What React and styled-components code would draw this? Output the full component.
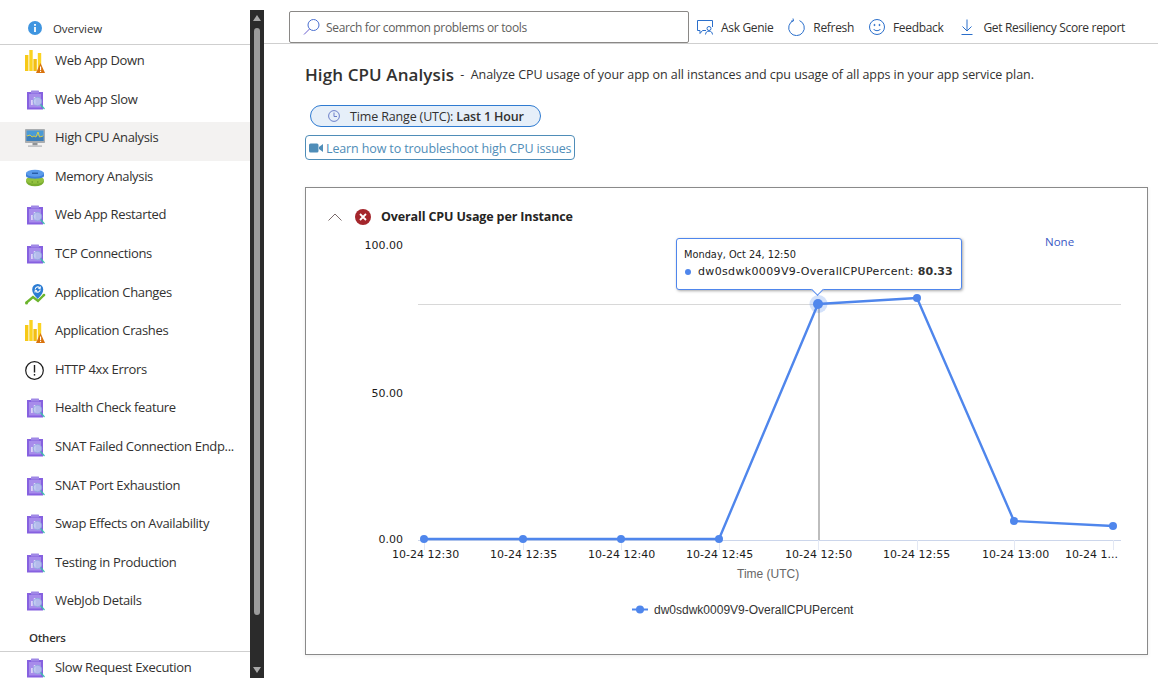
import React from 'react';
import styled, { createGlobalStyle } from 'styled-components';

const GlobalStyle = createGlobalStyle`
  html, body {
    margin: 0;
    padding: 0;
    height: 100%;
    overflow: hidden;
    background: #fff;
  }
  body {
    font-family: 'Open Sans', 'Liberation Sans', sans-serif;
    color: #323130;
  }
`;

const Page = styled.div`
  display: flex;
  width: 1158px;
  height: 678px;
  overflow: hidden;
`;

const Sidebar = styled.nav`
  width: 250px;
  flex: none;
  height: 678px;
  overflow: hidden;
`;

const OverviewRow = styled.div`
  display: flex;
  align-items: center;
  height: 45px;
  padding: 12px 0 0 28px;
  box-sizing: border-box;
  border-bottom: 1px solid #cfcfcf;
  font-size: 11.5px;
  letter-spacing: -0.1px;
  color: #323130;
  gap: 11px;
`;

const NavRow = styled.div`
  display: flex;
  align-items: flex-start;
  height: 38.6px;
  padding-left: 25px;
  gap: 8px;
  background: ${(p) => (p.$active ? '#f3f2f1' : 'transparent')};
`;

const NavIcon = styled.svg`
  width: 22px;
  height: 24px;
  flex: none;
  margin-top: 5px;
`;

const NavLabel = styled.span`
  font-size: 13px;
  line-height: 31px;
  letter-spacing: -0.33px;
  white-space: nowrap;
  color: #323130;
`;

const GroupTitle = styled.div`
  height: 28px;
  box-sizing: border-box;
  padding: 6px 0 0 29px;
  line-height: 16px;
  font-size: 11.5px;
  font-weight: 600;
  letter-spacing: -0.25px;
  border-bottom: 1px solid #cfcfcf;
`;

const Scrollbar = styled.div`
  width: 14px;
  flex: none;
  margin-top: 10px;
  background: #2b2b2b;
  display: flex;
  flex-direction: column;
  align-items: center;
`;

const ScrollArrow = styled.div`
  width: 0;
  height: 0;
  flex: none;
  margin: ${(p) => (p.$down ? 'auto 0 5px' : '5px 0 6px')};
  border-left: 4px solid transparent;
  border-right: 4px solid transparent;
  ${(p) => (p.$down ? 'border-top: 6px solid #a8a8a8;' : 'border-bottom: 6px solid #a8a8a8;')}
`;

const ScrollThumb = styled.div`
  width: 6px;
  height: 587px;
  flex: none;
  margin-top: 1px;
  border-radius: 3px;
  background: #9b9b9b;
`;

const Main = styled.main`
  flex: 1;
  min-width: 0;
  display: flex;
  flex-direction: column;
`;

const TopBar = styled.header`
  display: flex;
  align-items: flex-start;
  height: 44px;
  box-sizing: border-box;
  padding: 11px 0 0 25px;
  border-bottom: 1px solid #cfcfcf;
`;

const SearchBox = styled.div`
  display: flex;
  align-items: center;
  width: 400px;
  height: 32px;
  flex: none;
  box-sizing: border-box;
  border: 1px solid #8a8886;
  border-radius: 2px;
  padding-left: 13px;
  gap: 5px;
  font-size: 12px;
  letter-spacing: -0.33px;
  color: #605e5c;
`;

const Action = styled.div`
  display: flex;
  align-items: center;
  height: 32px;
  margin-left: ${(p) => p.$left}px;
  gap: ${(p) => p.$gap}px;
  font-size: 12px;
  letter-spacing: -0.33px;
  white-space: nowrap;
  color: #323130;
`;

const Content = styled.div`
  flex: 1;
  padding: 20px 10px 0 41px;
`;

const TitleRow = styled.div`
  display: flex;
  align-items: center;
  height: 22px;
  white-space: nowrap;
`;

const Title = styled.h1`
  margin: 0;
  font-size: 17px;
  line-height: 22px;
  font-weight: 600;
  letter-spacing: 0.1px;
  color: #323130;
`;

const Subtitle = styled.span`
  font-size: 12.5px;
  line-height: 18px;
  letter-spacing: -0.06px;
  margin: 0 0 1px 3px;
  color: #323130;
`;

const TimePill = styled.div`
  display: flex;
  align-items: center;
  width: 231px;
  height: 22px;
  box-sizing: border-box;
  margin: 19px 0 0 5px;
  padding-left: 17px;
  gap: 10px;
  border: 1px solid #2f7bd1;
  border-radius: 11px;
  background: #e6eff9;
  font-size: 12.5px;
  letter-spacing: -0.15px;
  white-space: nowrap;
  b {
    font-weight: 600;
  }
`;

const LearnLink = styled.a`
  display: flex;
  align-items: center;
  width: 270px;
  height: 25px;
  box-sizing: border-box;
  margin-top: 8px;
  padding: 1px 0 0 3px;
  gap: 3px;
  border: 1px solid #4f8db8;
  border-radius: 4px;
  color: #4f8db8;
  font-size: 12.5px;
  letter-spacing: -0.13px;
  white-space: nowrap;
`;

const Card = styled.section`
  width: 843px;
  height: 468px;
  box-sizing: border-box;
  margin-top: 27px;
  border: 1px solid #8a8a8a;
  box-shadow: 0 1px 4px rgba(0, 0, 0, 0.08);
`;

const CardHeader = styled.div`
  display: flex;
  align-items: center;
  height: 44px;
  box-sizing: border-box;
  padding: 13px 0 0 22px;
  font-size: 12.5px;
  font-weight: 700;
  letter-spacing: -0.13px;
  color: #252423;
  white-space: nowrap;
`;

const Chevron = styled.svg`
  width: 14px;
  height: 8px;
  flex: none;
  margin-right: 13px;
`;

const StatusIcon = styled.svg`
  width: 16px;
  height: 16px;
  flex: none;
  margin-right: 10px;
`;

const ChartArea = styled.div`
  position: relative;
  height: 422px;
`;

const ChartSvg = styled.svg`
  display: block;
  width: 841px;
  height: 422px;
`;

const AxisLabel = styled.text`
  font-family: 'DejaVu Sans', sans-serif;
  font-size: 11px;
  fill: #1c1c1c;
`;

const PlainLabel = styled.text`
  font-family: 'Liberation Sans', sans-serif;
  font-size: 12px;
  fill: ${(p) => p.$fill};
`;

const NoneLink = styled.span`
  position: absolute;
  left: 739px;
  top: 2px;
  font-size: 11.5px;
  line-height: 16px;
  color: #3a58c4;
`;

const Tooltip = styled.div`
  position: absolute;
  left: 370px;
  top: 6px;
  width: 286px;
  height: 52px;
  box-sizing: border-box;
  padding: 9px 0 0 7px;
  background: #fff;
  border: 1px solid #4f86ec;
  border-radius: 3px;
  box-shadow: 1px 1px 3px rgba(0, 0, 0, 0.35);
  font-family: 'DejaVu Sans', sans-serif;
  color: #222;
  white-space: nowrap;
  &::after {
    content: '';
    position: absolute;
    left: 136px;
    bottom: -5px;
    width: 8px;
    height: 8px;
    background: #fff;
    border-right: 1px solid #4f86ec;
    border-bottom: 1px solid #4f86ec;
    transform: rotate(45deg);
  }
`;

const TooltipDate = styled.div`
  font-size: 9.8px;
  line-height: 14px;
`;

const TooltipValue = styled.div`
  display: flex;
  align-items: center;
  margin-top: 2px;
  font-size: 11px;
  line-height: 16px;
  letter-spacing: 0.35px;
  b {
    margin-left: 4px;
    font-weight: 700;
    letter-spacing: 0;
    color: #333;
  }
`;

const TooltipDot = styled.span`
  width: 6px;
  height: 6px;
  margin: 0 7px 0 1px;
  border-radius: 50%;
  background: #4f86ec;
`;

function BarsIcon() {
  return (
    <NavIcon viewBox="0 0 22 24">
      <rect x="0" y="5" width="3.4" height="16" fill="#f7c916" />
      <rect x="4.3" y="0" width="3.4" height="21" fill="#fbd321" />
      <rect x="8.4" y="9" width="3.4" height="12" fill="#f2bd12" />
      <rect x="12.8" y="3" width="3.4" height="18" fill="#fbd321" />
      <path d="M15.5 13 L20 23 L11 23 Z" fill="#d9730d" />
      <rect x="15" y="16.5" width="1.1" height="3.6" fill="#fff" />
      <rect x="15" y="20.8" width="1.1" height="1.2" fill="#fff" />
    </NavIcon>
  );
}

function ClipboardIcon() {
  return (
    <NavIcon viewBox="0 0 22 24">
      <rect x="2" y="3" width="16" height="17.5" fill="#8661e0" />
      <rect x="6" y="1.5" width="8" height="3" rx="0.5" fill="#a088e6" />
      <rect x="4" y="5" width="12" height="13.5" fill="#a78ceb" />
      <rect x="6" y="11" width="1.8" height="5" fill="#dcd4f7" />
      <rect x="8.8" y="8" width="1.8" height="8" fill="#dcd4f7" />
      <circle cx="12.5" cy="12.5" r="4.2" fill="#b8c9ee" fillOpacity="0.75" stroke="#8ea8de" strokeWidth="0.8" />
      <path d="M15.5 15.5 L19.5 20" stroke="#3fbfae" strokeWidth="1.2" />
    </NavIcon>
  );
}

function MonitorIcon() {
  return (
    <NavIcon viewBox="0 0 22 24">
      <rect x="0" y="2" width="20" height="14" rx="0.8" fill="#a9adb0" />
      <rect x="1.5" y="3.5" width="17" height="10.5" fill="#4a9ad6" />
      <path d="M1.5 9 H18.5 V14 H1.5 Z" fill="#3d7fb8" />
      <path d="M2 9 L5 8 L7 10 L9 9 L11 10 L13 5 L14.5 10 L18 9" fill="none" stroke="#e9d23a" strokeWidth="0.9" />
      <rect x="7.5" y="16" width="5" height="2.5" fill="#8f9396" />
      <rect x="3" y="18.3" width="14" height="1.7" fill="#c2c4c6" />
    </NavIcon>
  );
}

function DiscIcon() {
  return (
    <NavIcon viewBox="0 0 22 24">
      <ellipse cx="10" cy="15.5" rx="9" ry="4.8" fill="#79ad2f" />
      <ellipse cx="10" cy="14" rx="9" ry="3.8" fill="#93c23f" />
      <path d="M1 7.5 C1 4.5 19 4.5 19 7.5 V10 C19 13.5 1 13.5 1 10 Z" fill="#3c7fd8" />
      <ellipse cx="10" cy="7.3" rx="9" ry="3.5" fill="#5b9bea" />
      <rect x="7" y="6.6" width="6" height="1.3" fill="#24579f" />
      <rect x="6.5" y="15.5" width="1.5" height="1" fill="#5f8f22" />
      <rect x="12" y="15.5" width="1.5" height="1" fill="#5f8f22" />
    </NavIcon>
  );
}

function ChangesIcon() {
  return (
    <NavIcon viewBox="0 0 22 24">
      <path d="M1 21 L8 15 L13 19 L19 13" fill="none" stroke="#6cb52d" strokeWidth="2.4" />
      <circle cx="1.5" cy="21" r="1.5" fill="#6cb52d" />
      <circle cx="19" cy="13" r="1.3" fill="#6cb52d" />
      <path d="M12.7 17 C9 13 7.2 10.5 7.2 7.5 A5.5 5.5 0 0 1 18.2 7.5 C18.2 10.5 16.4 13 12.7 17 Z" fill="#2b7cd3" />
      <path d="M10.2 7.5 A2.6 2.6 0 0 1 14.8 5.8 M15.2 7.5 A2.6 2.6 0 0 1 10.6 9.2" fill="none" stroke="#fff" strokeWidth="1.1" />
      <path d="M15.4 4.4 V6.5 H13.3 M10 10.6 V8.5 H12.1" fill="none" stroke="#fff" strokeWidth="0.9" />
    </NavIcon>
  );
}

function AlertIcon() {
  return (
    <NavIcon viewBox="0 0 22 24">
      <circle cx="9.5" cy="11.5" r="8.8" fill="none" stroke="#1c1c1c" strokeWidth="1.2" />
      <rect x="8.8" y="6" width="1.4" height="7.5" fill="#1c1c1c" />
      <rect x="8.8" y="15" width="1.4" height="1.6" fill="#1c1c1c" />
    </NavIcon>
  );
}

const ITEMS = [
  ['Web App Down', BarsIcon],
  ['Web App Slow', ClipboardIcon],
  ['High CPU Analysis', MonitorIcon, true],
  ['Memory Analysis', DiscIcon],
  ['Web App Restarted', ClipboardIcon],
  ['TCP Connections', ClipboardIcon],
  ['Application Changes', ChangesIcon],
  ['Application Crashes', BarsIcon],
  ['HTTP 4xx Errors', AlertIcon],
  ['Health Check feature', ClipboardIcon],
  ['SNAT Failed Connection Endp...', ClipboardIcon],
  ['SNAT Port Exhaustion', ClipboardIcon],
  ['Swap Effects on Availability', ClipboardIcon],
  ['Testing in Production', ClipboardIcon],
  ['WebJob Details', ClipboardIcon],
];

const POINTS = [
  [424, 539],
  [523, 539],
  [621, 539],
  [719, 539],
  [818, 304],
  [917, 298],
  [1014, 521],
  [1113, 526],
];

const TICK_LABELS = [
  [392, '10-24 12:30'],
  [490, '10-24 12:35'],
  [588, '10-24 12:40'],
  [686, '10-24 12:45'],
  [785, '10-24 12:50'],
  [883, '10-24 12:55'],
  [982, '10-24 13:00'],
  [1065, '10-24 1...'],
];

function Chart() {
  return (
    <ChartSvg viewBox="306 232 841 422">
      <line x1="418" x2="1121" y1="304.5" y2="304.5" stroke="#d8d8d8" />
      <line x1="418" x2="1121" y1="540.5" y2="540.5" stroke="#ccd6eb" />
      {POINTS.map(([x]) => (
        <line key={x} x1={x + 0.5} x2={x + 0.5} y1="540" y2="550" stroke="#e3e8f4" />
      ))}
      <line x1="819" x2="819" y1="304" y2="540" stroke="#bdbdbd" strokeWidth="2" />
      <polyline
        points={POINTS.map((p) => p.join(',')).join(' ')}
        fill="none"
        stroke="#4f86ec"
        strokeWidth="2.4"
        strokeLinejoin="round"
      />
      <circle cx="818.5" cy="304" r="9" fill="#4f86ec" fillOpacity="0.25" />
      {POINTS.map(([x, y], i) => (
        <circle key={x} cx={x} cy={y} r={i === 4 ? 5 : 4} fill="#4f86ec" />
      ))}
      <AxisLabel x="403" y="249" textAnchor="end">100.00</AxisLabel>
      <AxisLabel x="403" y="397" textAnchor="end">50.00</AxisLabel>
      <AxisLabel x="403" y="543" textAnchor="end">0.00</AxisLabel>
      {TICK_LABELS.map(([x, label]) => (
        <AxisLabel key={label} x={x} y="558">{label}</AxisLabel>
      ))}
      <PlainLabel x="737" y="578" $fill="#666">Time (UTC)</PlainLabel>
      <line x1="632" x2="648" y1="609.5" y2="609.5" stroke="#4f86ec" strokeWidth="2" />
      <circle cx="640" cy="609.5" r="4" fill="#4f86ec" />
      <PlainLabel x="654" y="614" $fill="#333">dw0sdwk0009V9-OverallCPUPercent</PlainLabel>
    </ChartSvg>
  );
}

export default function App() {
  return (
    <>
      <GlobalStyle />
      <Page>
        <Sidebar>
          <OverviewRow>
            <svg width="14" height="14" viewBox="0 0 14 14">
              <circle cx="7" cy="7" r="7" fill="#3f95e0" />
              <rect x="6.1" y="6" width="1.8" height="5" fill="#fff" />
              <rect x="6.1" y="3" width="1.8" height="1.8" fill="#fff" />
            </svg>
            Overview
          </OverviewRow>
          {ITEMS.map(([label, Icon, active]) => (
            <NavRow key={label} $active={active}>
              <Icon />
              <NavLabel>{label}</NavLabel>
            </NavRow>
          ))}
          <GroupTitle>Others</GroupTitle>
          <NavRow>
            <ClipboardIcon />
            <NavLabel>Slow Request Execution</NavLabel>
          </NavRow>
        </Sidebar>
        <Scrollbar>
          <ScrollArrow />
          <ScrollThumb />
          <ScrollArrow $down />
        </Scrollbar>
        <Main>
          <TopBar>
            <SearchBox>
              <svg width="18" height="18" viewBox="0 0 18 18" fill="none" stroke="#4a6fd0" strokeWidth="1">
                <circle cx="10.5" cy="7" r="5.5" />
                <path d="M6.5 11 L1 16.5" stroke="#6a5fd0" />
              </svg>
              Search for common problems or tools
            </SearchBox>
            <Action $left={8} $gap={8}>
              <svg width="16" height="16" viewBox="0 0 16 16" fill="none" stroke="#2b6fcb" strokeWidth="1">
                <path d="M9 11.5 H5.5 L3 14.5 V11.5 H0.5 V1.5 H15.5 V8" />
                <circle cx="12" cy="9.5" r="2" />
                <path d="M8.5 15.5 C8.8 13 10 12.2 12 12.2 C14 12.2 15.2 13 15.5 15.5" />
              </svg>
              Ask Genie
            </Action>
            <Action $left={15} $gap={8}>
              <svg width="17" height="18" viewBox="0 0 17 18" fill="none" stroke="#2b6fcb" strokeWidth="1">
                <path d="M5.5 2.6 A7.8 7.8 0 1 0 11.5 2.6" />
                <path d="M5 0.5 L5.5 2.8 L3 3.2" />
              </svg>
              Refresh
            </Action>
            <Action $left={15} $gap={8}>
              <svg width="16" height="16" viewBox="0 0 16 16" fill="none" stroke="#2b6fcb" strokeWidth="1">
                <circle cx="8" cy="8" r="7.5" />
                <circle cx="5.5" cy="6" r="0.6" fill="#2b6fcb" />
                <circle cx="10.5" cy="6" r="0.6" fill="#2b6fcb" />
                <path d="M4.5 10 C6 12.2 10 12.2 11.5 10" />
              </svg>
              Feedback
            </Action>
            <Action $left={18} $gap={10}>
              <svg width="12" height="16" viewBox="0 0 12 16" fill="none" stroke="#2b6fcb" strokeWidth="1">
                <path d="M6 0.5 V11.5 M1.5 7.5 L6 12 L10.5 7.5" />
                <path d="M0.5 15.5 H11.5" />
              </svg>
              Get Resiliency Score report
            </Action>
          </TopBar>
          <Content>
            <TitleRow>
              <Title>High CPU Analysis</Title>
              <Subtitle>&nbsp;-&nbsp; Analyze CPU usage of your app on all instances and cpu usage of all apps in your app service plan.</Subtitle>
            </TitleRow>
            <TimePill>
              <svg width="12" height="12" viewBox="0 0 12 12" fill="none" stroke="#6c7fc9" strokeWidth="1">
                <circle cx="6" cy="6" r="5.4" />
                <path d="M6 2.5 V6.5 H9" />
              </svg>
              <span>Time Range (UTC): <b>Last 1 Hour</b></span>
            </TimePill>
            <LearnLink>
              <svg width="14" height="10" viewBox="0 0 14 10" fill="#4f8db8">
                <rect x="0" y="0.5" width="9.5" height="9" rx="1.5" />
                <path d="M10 4 L14 1 V9 L10 6 Z" />
              </svg>
              Learn how to troubleshoot high CPU issues
            </LearnLink>
            <Card>
              <CardHeader>
                <Chevron viewBox="0 0 14 8" fill="none" stroke="#7a6a6a" strokeWidth="1">
                  <path d="M0.5 7.5 L7 1 L13.5 7.5" />
                </Chevron>
                <StatusIcon viewBox="0 0 16 16">
                  <circle cx="8" cy="8" r="8" fill="#a4262c" />
                  <path d="M5 5 L11 11 M11 5 L5 11" stroke="#fff" strokeWidth="1.8" />
                </StatusIcon>
                Overall CPU Usage per Instance
              </CardHeader>
              <ChartArea>
                <Chart />
                <NoneLink>None</NoneLink>
                <Tooltip>
                  <TooltipDate>Monday, Oct 24, 12:50</TooltipDate>
                  <TooltipValue>
                    <TooltipDot />
                    dw0sdwk0009V9-OverallCPUPercent:
                    <b>80.33</b>
                  </TooltipValue>
                </Tooltip>
              </ChartArea>
            </Card>
          </Content>
        </Main>
      </Page>
    </>
  );
}
